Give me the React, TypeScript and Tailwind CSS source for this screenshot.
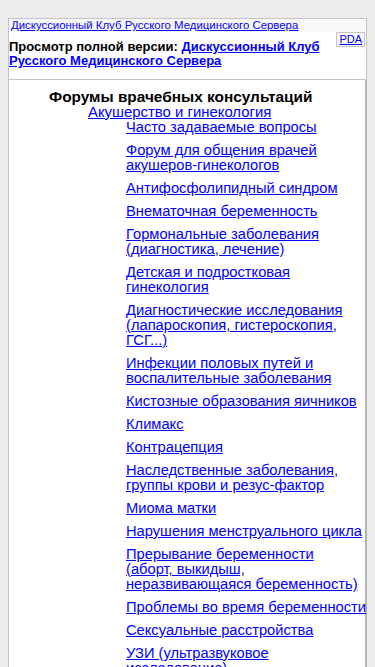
import React from "react";

const items: string[][] = [
  ["Часто задаваемые вопросы"],
  ["Форум для общения врачей", "акушеров-гинекологов"],
  ["Антифосфолипидный синдром"],
  ["Внематочная беременность"],
  ["Гормональные заболевания", "(диагностика, лечение)"],
  ["Детская и подростковая", "гинекология"],
  ["Диагностические исследования", "(лапароскопия, гистероскопия,", "ГСГ...)"],
  ["Инфекции половых путей и", "воспалительные заболевания"],
  ["Кистозные образования яичников"],
  ["Климакс"],
  ["Контрацепция"],
  ["Наследственные заболевания,", "группы крови и резус-фактор"],
  ["Миома матки"],
  ["Нарушения менструального цикла"],
  ["Прерывание беременности", "(аборт, выкидыш,", "неразвивающаяся беременность)"],
  ["Проблемы во время беременности"],
  ["Сексуальные расстройства"],
  ["УЗИ (ультразвуковое", "исследование)"],
  ["Эндометриоз"],
  ["Бесплодие"],
];

export default function App() {
  return (
    <div
      className="min-h-screen bg-[#ececec] pt-[18px] px-2 pb-4 text-black"
      style={{ fontFamily: '"Liberation Sans", Arial, sans-serif' }}
    >
      <div className="border border-[#c4c4c4] bg-white">
        <div className="bg-[#f8f8f8] h-[13px] px-[2px] text-[11.4px] leading-[13px]">
          <a href="#" className="text-[#0000ff] underline">
            Дискуссионный Клуб Русского Медицинского Сервера
          </a>
        </div>
        <div className="h-[47px]">
          <div className="float-right mr-[1px] border border-[#c4c4c4] bg-[#f8f8f8] px-[2px] text-[11px] leading-[13px]">
            <a href="#" className="text-[#0000ff] underline">
              PDA
            </a>
          </div>
          <div className="pt-[8px] text-[13px] font-bold leading-[14px]">
            Просмотр полной версии:{" "}
            <a href="#" className="text-[#0000ff] underline">
              Дискуссионный Клуб Русского Медицинского Сервера
            </a>
          </div>
        </div>
      </div>
      <div className="border border-t-0 border-[#c4c4c4] border-r-2 border-r-[#b4b4b4] bg-white pt-[9px] pb-4 text-[14.7px] leading-[15px]">
        <div className="ml-[40px] font-bold text-[15.4px]">Форумы врачебных консультаций</div>
        <div className="ml-[79px] mt-px">
          <a href="#" className="text-[#0000ff] underline text-[14.9px]">
            Акушерство и гинекология
          </a>
        </div>
        <ul className="ml-[117px] mr-0 flex flex-col gap-2">
          {items.map((lines) => (
            <li key={lines.join(" ")} className="whitespace-nowrap">
              <a href="#" className="text-[#0000ff] underline">
                {lines.map((l, i) => (
                  <React.Fragment key={i}>
                    {i > 0 && <br />}
                    {l}
                  </React.Fragment>
                ))}
              </a>
            </li>
          ))}
        </ul>
      </div>
    </div>
  );
}
